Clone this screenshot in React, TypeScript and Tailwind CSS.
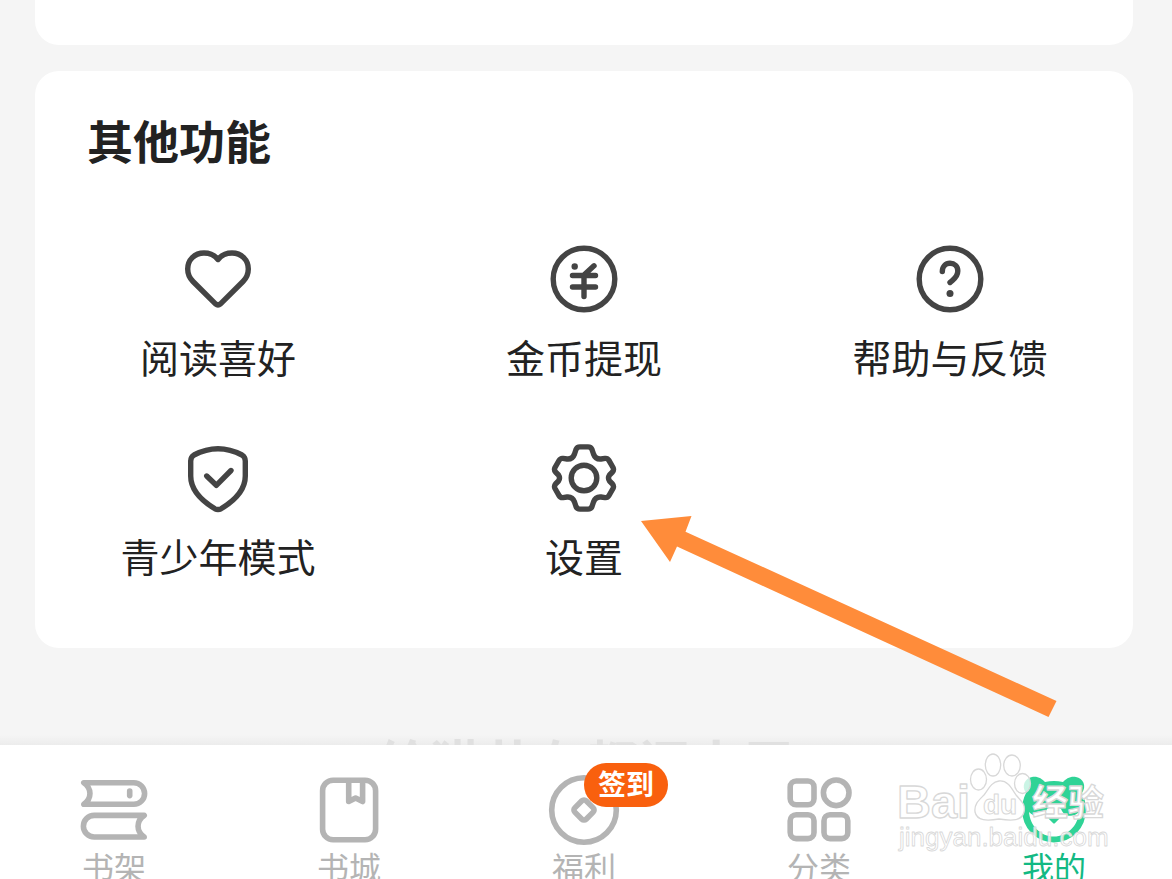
import type { ReactNode } from "react";

const features: { label: string; icon: ReactNode }[] = [
  {
    label: "阅读喜好",
    icon: (
      <path d="M36 16.5C32.5 12 27.5 10 22 10C12.5 10 5.7 17 5.7 26C5.7 31 7.5 35 11 38.5L33.5 60.9Q36 62.9 38.5 60.9L61 38.5C64.5 35 66.3 31 66.3 26C66.3 17 59.5 10 50 10C44.5 10 39.5 12 36 16.5Z" />
    ),
  },
  {
    label: "金币提现",
    icon: (
      <>
        <circle cx="36" cy="36" r="30.8" />
        <circle cx="26.7" cy="23.5" r="3.2" fill="currentColor" stroke="none" />
        <path d="M46 22.8L36.5 31.5M24.5 32.5H47.5M24.5 44H47.5M36 32V53.5" />
      </>
    ),
  },
  {
    label: "帮助与反馈",
    icon: (
      <>
        <circle cx="36" cy="36" r="30.8" />
        <path d="M28.3 28.5C28.3 23.5 31.5 20.3 36 20.3C40.5 20.3 43.8 23.5 43.8 28C43.8 34.5 39 36.5 36 39.5" />
        <circle cx="36" cy="50.5" r="3.5" fill="currentColor" stroke="none" />
      </>
    ),
  },
  {
    label: "青少年模式",
    icon: (
      <>
        <path d="M12 13Q24 6.7 36 6.7Q48 6.7 60 13Q63.3 15 63.3 19V34C63.3 49 52 59 39 66.8Q36 68.3 33 66.8C20 59 8.7 49 8.7 34V19Q8.7 15 12 13Z" />
        <path d="M24.7 34L34.3 43.3L49 28.5" />
      </>
    ),
  },
  {
    label: "设置",
    icon: (
      <>
        <path d="M36 4.9H40Q43 4.9 44 7.5L45.5 12Q47.5 17.5 53 17L57 16.4Q59.5 16 61 18.5L65 25.5Q66.2 28 64.5 30L61.5 33Q59.5 36 61.5 39L64.5 42Q66.2 44 65 46.5L61 53.5Q59.5 56 57 55.6L53 55Q47.5 54.5 45.5 60L44 64.5Q43 67.1 40 67.1H32Q29 67.1 28 64.5L26.5 60Q24.5 54.5 19 55L15 55.6Q12.5 56 11 53.5L7 46.5Q5.8 44 7.5 42L10.5 39Q12.5 36 10.5 33L7.5 30Q5.8 28 7 25.5L11 18.5Q12.5 16 15 16.4L19 17Q24.5 17.5 26.5 12L28 7.5Q29 4.9 32 4.9Z" />
        <circle cx="36" cy="36" r="12.8" />
      </>
    ),
  },
];

const tabs: { label: string; icon: ReactNode; badge?: string; active?: boolean }[] = [
  {
    label: "书架",
    icon: (
      <>
        <path d="M5.8 8.7H55.8A10.8 10.8 0 0 1 55.8 30.3H5.8C14 24.5 14 14.5 5.8 8.7Z" />
        <path d="M51.7 17V21.6" />
        <path d="M66.2 41.4H16.2A10.8 10.8 0 0 0 16.2 63H66.2C58 57.2 58 47.2 66.2 41.4Z" />
      </>
    ),
  },
  {
    label: "书城",
    icon: (
      <>
        <rect x="9.6" y="6.2" width="53" height="59.5" rx="10.5" />
        <path d="M35.7 7V27.5L42.6 24L49.6 27.5V7" />
      </>
    ),
  },
  {
    label: "福利",
    badge: "签到",
    icon: (
      <>
        <circle cx="36" cy="36" r="32.3" />
        <rect x="28" y="28" width="16" height="16" rx="3" transform="rotate(45 36 36)" />
      </>
    ),
  },
  {
    label: "分类",
    icon: (
      <>
        <rect x="7.2" y="7" width="23.8" height="23.8" rx="6" />
        <circle cx="53.2" cy="18.8" r="12.8" />
        <rect x="7.2" y="40.8" width="23.8" height="23.8" rx="6" />
        <rect x="41" y="40.8" width="23.8" height="23.8" rx="6" />
      </>
    ),
  },
  {
    label: "我的",
    active: true,
    icon: (
      <>
        <path
          fill="currentColor"
          stroke="none"
          fillRule="evenodd"
          d="M14 3C20 2 24 5 27 8Q36 6 45 8C48 5 52 2 58 3C65 4 69 12 64 19Q68 27 68 36A32 32.5 0 0 1 4 36Q4 27 8 19C3 12 7 4 14 3ZM11 38C12 52 23 62.5 36 62.5C49 62.5 60 52 61 38C55 44 46 43 43 35Q36 30 29 35C26 43 17 44 11 38Z"
        />
        <path d="M32 44H40L36 48Z" fill="currentColor" strokeWidth="3" />
      </>
    ),
  },
];

function Watermark() {
  return (
    <svg
      viewBox="0 0 220 110"
      className="pointer-events-none absolute top-[5px] right-[57px] h-[110px] w-[220px]"
      fill="#ffffff"
      stroke="#d8d8d8"
      strokeWidth="1.3"
      strokeLinejoin="round"
      aria-hidden="true"
    >
      <ellipse cx="83.5" cy="29.5" rx="8" ry="10.5" />
      <ellipse cx="98" cy="15" rx="7.7" ry="11" />
      <ellipse cx="117" cy="15.5" rx="8.3" ry="10.5" />
      <ellipse cx="127.5" cy="33.5" rx="8" ry="10" fillOpacity="0.75" />
      <path d="M104 31C113 30 117 39 121 45C126 51 131 54 129 62C127 71 117 71 104 69C92 71 82 71 80 62C79 54 84 50 89 45C93 40 96 32 104 31Z" />
      <g className="font-['Liberation_Sans','Noto_Sans_CJK_SC',sans-serif] font-bold">
        <text x="2" y="68" fontSize="47">Bai</text>
        <text x="88" y="64" fontSize="28" strokeWidth="1">du</text>
        <text x="137" y="66" fontSize="36">经验</text>
      </g>
      <text x="4" y="96" fontSize="26" strokeWidth="0.8" fillOpacity="0.8" className="font-['Liberation_Sans',sans-serif]">
        jingyan.baidu.com
      </text>
    </svg>
  );
}

export default function App() {
  return (
    <div className="flex h-screen flex-col overflow-hidden bg-[#f5f5f5] font-['Noto_Sans_CJK_SC',sans-serif] text-[#222222]">
      <main className="flex shrink-0 flex-col gap-[26px] pr-[39px] pl-[35px]">
        <div className="h-[45px] rounded-b-3xl bg-white" />

        <section className="relative rounded-3xl bg-white pt-11 pb-[69px]">
          <h2 className="px-[52px] text-[46px] leading-[48px] font-bold">其他功能</h2>

          <div className="mt-20 grid grid-cols-3 gap-y-[62px]">
            {features.map((f) => (
              <button key={f.label} type="button" className="flex flex-col items-center gap-[17px]">
                <svg
                  viewBox="0 0 72 72"
                  className="size-[72px] text-[#444444]"
                  fill="none"
                  stroke="currentColor"
                  strokeWidth="5.4"
                  strokeLinecap="round"
                  strokeLinejoin="round"
                >
                  {f.icon}
                </svg>
                <span className="text-[39px] leading-[48px] whitespace-nowrap">{f.label}</span>
              </button>
            ))}
          </div>

          {/* flecha hacia 设置 */}
          <svg
            viewBox="0 0 424 212"
            className="pointer-events-none absolute top-[439px] right-[73px] h-[212px] w-[424px]"
            fill="#ff8c3a"
            aria-hidden="true"
          >
            <path d="M5 11L55.5 6L49.5 21.7L420.5 191L412.5 207L41 36.5L34 52Z" />
          </svg>
        </section>
      </main>

      {/* slogan, solo asoma por encima de la barra */}
      <div className="mt-[87px] h-2.5 shrink-0 overflow-hidden bg-linear-to-b from-[#f5f5f5] to-[#ececec] text-center text-[52px] leading-[54px] font-bold text-[#e0e0e0]">
        给猫共有都阅小屋
      </div>

      <nav className="relative flex shrink-0 justify-between bg-white pt-[29px] pr-[84px] pl-20">
        {tabs.map((t) => (
          <a
            key={t.label}
            href="#"
            className={`relative flex w-[68px] flex-col items-center ${t.active ? "text-[#2fd396]" : "text-[#b4b4b4]"}`}
          >
            <svg
              viewBox="0 0 72 72"
              className="size-[72px] shrink-0"
              fill="none"
              stroke="currentColor"
              strokeWidth="5.6"
              strokeLinecap="round"
              strokeLinejoin="round"
            >
              {t.icon}
            </svg>
            <span className={`text-[32px] leading-10 whitespace-nowrap ${t.active ? "text-[#12b983]" : ""}`}>{t.label}</span>
            {t.badge && (
              <span className="absolute -top-[11px] left-[34px] rounded-full bg-[#f9600e] px-3.5 pb-1 text-[28px] leading-10 font-bold whitespace-nowrap text-white">
                {t.badge}
              </span>
            )}
          </a>
        ))}
        <Watermark />
      </nav>
    </div>
  );
}
